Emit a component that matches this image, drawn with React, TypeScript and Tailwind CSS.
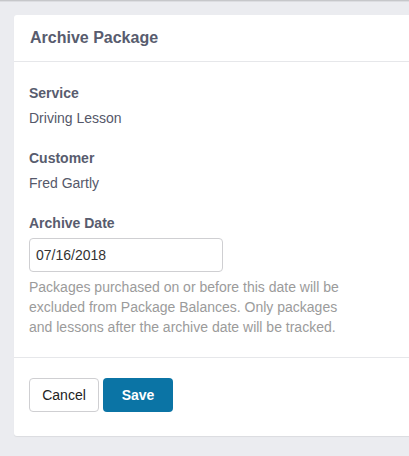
export default function App() {
  return (
    <div
      className="min-h-[456px] w-[409px] overflow-hidden bg-[#ebecf0]"
      style={{ fontFamily: '"Liberation Sans", Arial, sans-serif' }}
    >
      <div className="h-px bg-[#c6c7ca]" />
      <div className="h-px bg-[#dcdde1]" />
      <div className="ml-[14px] mt-[13px] w-[420px] rounded-[3px] bg-white shadow-[0_1px_1px_rgba(0,0,0,0.07)]">
        <div className="flex h-[47px] items-center border-b border-[#e6e7ea] px-[16px]">
          <h1 className="text-[16px] font-bold text-[#585c6e]">Archive Package</h1>
        </div>
        <div className="px-[15px] pt-[21px] pb-[20px] border-b border-[#e6e7ea]">
          <div className="text-[14px] font-bold leading-[20px] text-[#585c6e]">Service</div>
          <div className="mt-[5px] text-[14px] leading-[20px] text-[#55586a]">Driving Lesson</div>
          <div className="mt-[20px] text-[14px] font-bold leading-[20px] text-[#585c6e]">Customer</div>
          <div className="mt-[5px] text-[14px] leading-[20px] text-[#55586a]">Fred Gartly</div>
          <div className="mt-[20px] text-[14px] font-bold leading-[20px] text-[#585c6e]">Archive Date</div>
          <div className="mt-[5px] flex h-[34px] w-[194px] items-center rounded-[4px] border border-[#cfcfd2] pl-[6px] text-[14px] text-[#333333]">
            07/16/2018
          </div>
          <p className="mt-[5px] w-[330px] text-[14px] leading-[20px] text-[#9b9b9b]">
            Packages purchased on or before this date will be excluded from Package Balances. Only packages and lessons after the archive date will be tracked.
          </p>
        </div>
        <div className="flex gap-[4px] px-[15px] pt-[20px] pb-[24px]">
          <button className="flex h-[34px] w-[70px] items-center justify-center rounded-[4px] border border-[#cfcfd2] bg-white text-[14px] text-[#222222]">
            Cancel
          </button>
          <button className="flex h-[34px] w-[70px] items-center justify-center rounded-[4px] bg-[#0b74a5] text-[14px] font-bold text-white">
            Save
          </button>
        </div>
      </div>
    </div>
  );
}
